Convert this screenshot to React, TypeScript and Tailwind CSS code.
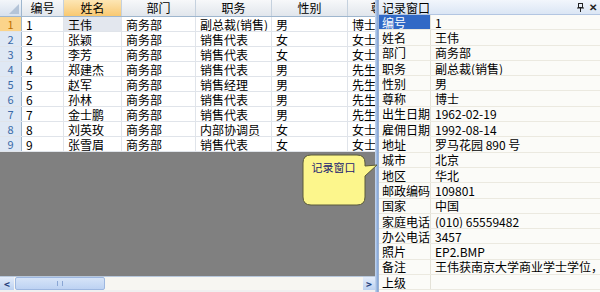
import React from "react";

const rows = [
  ["1", "王伟", "商务部", "副总裁(销售)", "男", "博士"],
  ["2", "张颖", "商务部", "销售代表", "女", "女士"],
  ["3", "李芳", "商务部", "销售代表", "女", "女士"],
  ["4", "郑建杰", "商务部", "销售代表", "男", "先生"],
  ["5", "赵军", "商务部", "销售经理", "男", "先生"],
  ["6", "孙林", "商务部", "销售代表", "男", "先生"],
  ["7", "金士鹏", "商务部", "销售代表", "男", "先生"],
  ["8", "刘英玫", "商务部", "内部协调员", "女", "女士"],
  ["9", "张雪眉", "商务部", "销售代表", "女", "女士"],
];

const headers = ["编号", "姓名", "部门", "职务", "性别", "尊称"];
const widths = ["w-[42px]", "w-[58px]", "w-[74px]", "w-[76px]", "w-[76px]", "w-[70px]"];

const props: [string, string][] = [
  ["编号", "1"],
  ["姓名", "王伟"],
  ["部门", "商务部"],
  ["职务", "副总裁(销售)"],
  ["性别", "男"],
  ["尊称", "博士"],
  ["出生日期", "1962-02-19"],
  ["雇佣日期", "1992-08-14"],
  ["地址", "罗马花园 890 号"],
  ["城市", "北京"],
  ["地区", "华北"],
  ["邮政编码", "109801"],
  ["国家", "中国"],
  ["家庭电话", "(010) 65559482"],
  ["办公电话", "3457"],
  ["照片", "EP2.BMP"],
  ["备注", "王伟获南京大学商业学士学位，获该校国际商务硕士学位"],
  ["上级", ""],
];

export default function App() {
  return (
    <div
      className="relative flex w-[600px] h-[292px] overflow-hidden bg-white text-[12px] text-black"
      style={{ fontFamily: '"Noto Sans CJK SC", "Noto Sans", sans-serif' }}
    >
      {/* Left grid */}
      <div className="flex flex-col w-[375px] shrink-0 h-full overflow-hidden">
        {/* header */}
        <div className="flex h-[17px] shrink-0 border-b border-[#9eb6ce]">
          <div className="w-[22px] shrink-0 h-full bg-gradient-to-b from-[#f3f6fa] to-[#d7e1ee] border-r border-[#9eb6ce] relative">
            <svg className="absolute right-[2px] bottom-[2px]" width="10" height="10" viewBox="0 0 10 10">
              <polygon points="10,0 10,10 0,10" fill="#b4c4d8" />
            </svg>
          </div>
          {headers.map((h, i) => (
            <div
              key={i}
              className={`${widths[i]} shrink-0 h-full flex items-center justify-center border-r border-[#c5d1de] leading-[14px] ${
                i === 1
                  ? "bg-gradient-to-b from-[#fde6b4] to-[#f8c870]"
                  : "bg-gradient-to-b from-[#f7f8fa] to-[#e1e6ec]"
              }`}
            >
              {h}
            </div>
          ))}
        </div>
        {rows.map((r, ri) => (
          <div key={ri} className="flex h-[15px] shrink-0 border-b border-[#e0e4ea]">
            <div
              className={`w-[22px] shrink-0 h-full flex items-center justify-center border-r border-[#9eb6ce] text-[11px] leading-[13px] ${
                ri === 0 ? "bg-[#fbd48a] text-[#c07000]" : "bg-[#dfe8f4] text-[#3a6aa8]"
              }`}
            >
              {r[0]}
            </div>
            {r.map((c, ci) => (
              <div
                key={ci}
                className={`${widths[ci]} shrink-0 h-full flex items-center pl-[4px] border-r border-[#e0e4ea] leading-[13px] whitespace-nowrap overflow-hidden ${
                  ri === 0 && ci === 1 ? "bg-[#e3e7ee]" : "bg-white"
                }`}
              >
                {c}
              </div>
            ))}
          </div>
        ))}
        <div className="flex-1 bg-[#808080]" />
        {/* scrollbar */}
        <div className="h-[14px] shrink-0 flex items-stretch bg-[#f7f6f2] border-t border-[#b8c8dc]">
          <div className="w-[14px] flex items-center justify-center bg-gradient-to-b from-[#e4edfb] to-[#bcd1f0] text-[#24407a] text-[10px] font-bold leading-none">
            &lt;
          </div>
          <div className="w-[90px] ml-[1px] bg-gradient-to-b from-[#d6e4f8] to-[#bdd2f2] border border-[#9db7e0] rounded-[2px] flex items-center justify-center">
            <div className="w-[6px] h-[5px] border-x border-[#8aa6d4]" />
          </div>
          <div className="flex-1" />
          <div className="w-[12px] flex items-center justify-center bg-gradient-to-b from-[#e4edfb] to-[#bcd1f0] text-[#24407a] text-[10px] font-bold leading-none">
            &gt;
          </div>
        </div>
        <div className="h-[2px] shrink-0 bg-[#f0f0f0]" />
      </div>

      {/* Sash */}
      <div className="w-[3px] shrink-0 bg-gradient-to-r from-[#c8d8ee] to-[#7fa2d6]" />

      {/* Right record window */}
      <div className="flex flex-col flex-1 h-full border-l border-[#9bb2d4] bg-[#fbfbf8] overflow-hidden">
        <div className="h-[15px] shrink-0 flex items-center justify-between px-[3px] bg-gradient-to-b from-[#f2f6fc] to-[#dbe6f5] border-b border-[#b3c6e2]">
          <span className="leading-[13px]">记录窗口</span>
          <span className="flex items-center gap-[5px] text-[10px] font-bold leading-none text-[#222]">
            <svg width="7" height="9" viewBox="0 0 7 9">
              <rect x="1.5" y="0.5" width="4" height="4" fill="none" stroke="#222" />
              <line x1="0" y1="5" x2="7" y2="5" stroke="#222" />
              <line x1="3.5" y1="5" x2="3.5" y2="9" stroke="#222" />
            </svg>
            <span>✕</span>
          </span>
        </div>
        {props.map(([k, v], i) => (
          <div key={i} className="flex h-[15.3px] shrink-0 border-b border-[#ebe9e0]">
            <div
              className={`w-[52px] shrink-0 h-full flex items-center pl-[3px] leading-[13px] border-r border-[#e4e2d8] ${
                i === 0 ? "bg-[#3169c6] text-white" : ""
              }`}
            >
              {k}
            </div>
            <div className="flex-1 h-full flex items-center pl-[4px] leading-[13px] whitespace-nowrap overflow-hidden">
              {v}
            </div>
          </div>
        ))}
      </div>

      {/* Callout bubble */}
      <div className="absolute left-[302px] top-[154px] w-[76px] h-[52px]">
        <svg width="76" height="52" viewBox="0 0 76 52" className="absolute inset-0">
          <path
            d="M9 1 H55 Q63 1 63 9 V12 L75 11 L63 22 V43 Q63 51 55 51 H9 Q1 51 1 43 V9 Q1 1 9 1 Z"
            fill="#fcf68c"
            stroke="#5a5a3a"
            strokeWidth="1"
          />
        </svg>
        <div className="absolute left-[0px] top-[7px] w-[63px] text-center text-[11px] leading-[13px] text-[#1a1a70]">
          记录窗口
        </div>
      </div>
    </div>
  );
}
